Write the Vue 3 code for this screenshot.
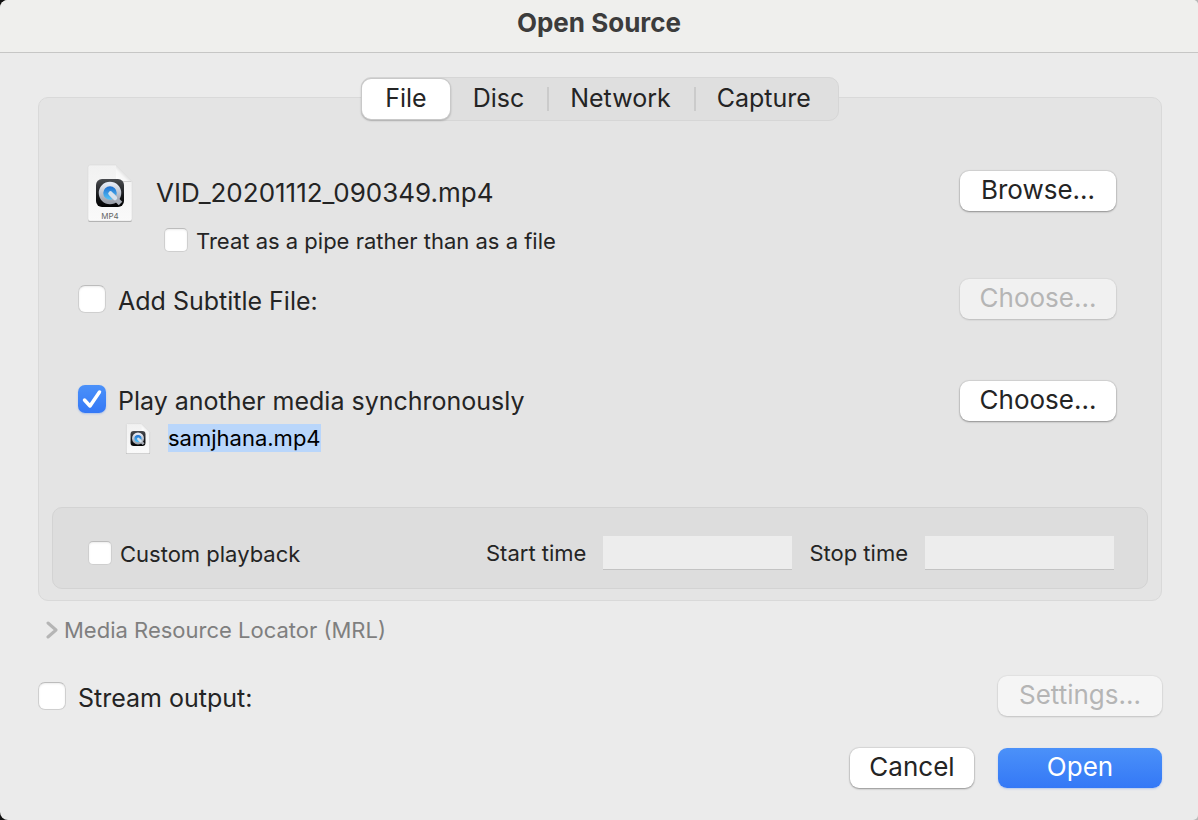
<script setup>
import { ref } from 'vue'

const tabs = ['File', 'Disc', 'Network', 'Capture']
const activeTab = ref('File')
const pipe = ref(false)
const subtitle = ref(false)
const sync = ref(true)
const custom = ref(false)
const stream = ref(false)
const start = ref('')
const stop = ref('')
</script>

<template>
  <div class="backdrop">
    <main class="window">
      <header class="titlebar"><h1>Open Source</h1></header>

      <div class="content">
        <nav class="tabs" role="tablist" aria-label="Source type">
          <button
            v-for="tab in tabs"
            :key="tab"
            type="button"
            role="tab"
            class="tab"
            :class="{ active: tab === activeTab }"
            :aria-selected="tab === activeTab"
            @click="activeTab = tab"
          >{{ tab }}</button>
        </nav>

        <section class="panel">
          <div class="row file-row">
            <svg class="doc" viewBox="0 -1 48 60" aria-hidden="true">
              <defs>
                <linearGradient id="page" x1="0" y1="0" x2="0" y2="1">
                  <stop offset="0" stop-color="#f1f1f1" />
                  <stop offset="1" stop-color="#fafafa" />
                </linearGradient>
                <linearGradient id="fold" x1="0" y1="1" x2="1" y2="0">
                  <stop offset="0" stop-color="#ffffff" />
                  <stop offset=".35" stop-color="#f6f6f6" />
                  <stop offset=".55" stop-color="#dadada" />
                </linearGradient>
                <linearGradient id="tile" x1="0" y1="0" x2="0" y2="1">
                  <stop offset="0" stop-color="#4a4c50" />
                  <stop offset=".6" stop-color="#15171a" />
                  <stop offset="1" stop-color="#020202" />
                </linearGradient>
                <linearGradient id="ring" x1="0" y1="0" x2="0" y2="1">
                  <stop offset="0" stop-color="#e4e9f4" />
                  <stop offset="1" stop-color="#9ba0aa" />
                </linearGradient>
                <linearGradient id="lens" x1="0" y1="0" x2="0" y2="1">
                  <stop offset="0" stop-color="#1560c8" />
                  <stop offset="1" stop-color="#5ed2ff" />
                </linearGradient>
              </defs>
              <path d="M4 3H30L46 19V57a2 2 0 0 1-2 2H4a2 2 0 0 1-2-2V5a2 2 0 0 1 2-2Z" fill="#a8a8a8" transform="translate(0 1)" />
              <path d="M4 3H30L46 19V57a2 2 0 0 1-2 2H4a2 2 0 0 1-2-2V5a2 2 0 0 1 2-2Z" fill="url(#page)" stroke="#d5d5d5" stroke-width=".5" />
              <path d="M30 4V18a2 2 0 0 0 2 2H46Z" fill="#d2d2d2" />
              <path d="M30 3V17a2 2 0 0 0 2 2H46Z" fill="url(#fold)" />
              <rect x="10" y="17" width="28" height="28" rx="6" fill="url(#tile)" />
              <circle cx="24" cy="31" r="9" fill="url(#lens)" stroke="url(#ring)" stroke-width="4.500" />
              <path d="M26 33L34.500 41.500" stroke="#a9aeb7" stroke-width="5" />
              <path d="M24.500 31.500L29 36" stroke="#d5e2ee" stroke-width="4.500" stroke-linecap="round" />
              <text x="24" y="57" text-anchor="middle" class="ext">MP4</text>
            </svg>
            <span class="filename">VID_20201112_090349.mp4</span>
            <button type="button" class="btn">Browse...</button>
          </div>

          <label class="check small pipe-row">
            <input v-model="pipe" type="checkbox" />
            <span>Treat as a pipe rather than as a file</span>
          </label>

          <div class="row subtitle-row">
            <label class="check">
              <input v-model="subtitle" type="checkbox" />
              <span>Add Subtitle File:</span>
            </label>
            <button type="button" class="btn" disabled>Choose...</button>
          </div>

          <div class="row sync-row">
            <label class="check">
              <input v-model="sync" type="checkbox" />
              <span>Play another media synchronously</span>
            </label>
            <button type="button" class="btn">Choose...</button>
          </div>

          <div class="media-row">
            <svg class="doc-small" viewBox="0 0 48 60" aria-hidden="true">
              <path d="M4 3H30L46 19V57a2 2 0 0 1-2 2H4a2 2 0 0 1-2-2V5a2 2 0 0 1 2-2Z" fill="#aaaaaa" transform="translate(0 2)" />
              <path d="M4 3H30L46 19V57a2 2 0 0 1-2 2H4a2 2 0 0 1-2-2V5a2 2 0 0 1 2-2Z" fill="url(#page)" stroke="#d2d2d2" />
              <path d="M31 3V18H46Z" fill="url(#fold)" />
              <rect x="10" y="17" width="28" height="28" rx="6" fill="url(#tile)" />
              <circle cx="24" cy="31" r="9" fill="url(#lens)" stroke="url(#ring)" stroke-width="4.500" />
              <path d="M26 33L34.500 41.500" stroke="#a9aeb7" stroke-width="5" />
              <path d="M24.500 31.500L29 36" stroke="#d5e2ee" stroke-width="4.500" stroke-linecap="round" />
            </svg>
            <mark>samjhana.mp4</mark>
          </div>

          <div class="playback">
            <label class="check small">
              <input v-model="custom" type="checkbox" />
              <span>Custom playback</span>
            </label>
            <div class="times">
              <label for="start">Start time</label>
              <input id="start" v-model="start" type="text" class="time" />
              <label for="stop">Stop time</label>
              <input id="stop" v-model="stop" type="text" class="time" />
            </div>
          </div>
        </section>

        <button type="button" class="mrl">
          <svg viewBox="0 0 12 18" aria-hidden="true">
            <path d="M2 2L10 9L2 16" fill="none" stroke="#b5b5b5" stroke-width="3" stroke-linecap="round" stroke-linejoin="round" />
          </svg>
          <span>Media Resource Locator (MRL)</span>
        </button>

        <div class="row stream-row">
          <label class="check">
            <input v-model="stream" type="checkbox" />
            <span>Stream output:</span>
          </label>
          <button type="button" class="btn wide" disabled>Settings...</button>
        </div>

        <footer class="actions">
          <button type="button" class="btn cancel">Cancel</button>
          <button type="button" class="btn wide primary">Open</button>
        </footer>
      </div>
    </main>
  </div>
</template>

<style>
body {
  margin: 0;
}
</style>

<style scoped>
.backdrop {
  background: linear-gradient(90deg, #111111 50%, #b8b8b8 50%);
}
.window {
  box-sizing: border-box;
  min-height: 100vh;
  border-radius: 8px 5px 5px 8px;
  overflow: hidden;
  background: #ebebeb;
  color: #242424;
  font-family: Inter, "Liberation Sans", sans-serif;
  font-size: 25px;
  line-height: 32px;
}
.titlebar {
  height: 52px;
  border-bottom: 1px solid #c6c6c5;
  background: #efefed;
  display: flex;
  justify-content: center;
}
h1 {
  margin: 0;
  padding-top: 7px;
  font-size: 26px;
  line-height: 32px;
  font-weight: 700;
  color: #3c3c3c;
}
.content {
  padding: 24px 36px 32px 38px;
  display: flex;
  flex-direction: column;
}
button {
  font: inherit;
  color: inherit;
  border: 0;
  padding: 0;
  margin: 0;
  background: none;
}
.tabs {
  position: relative;
  z-index: 1;
  align-self: center;
  display: flex;
  box-sizing: border-box;
  height: 44px;
  margin-bottom: -24px;
  padding-right: 4px;
  border: 1px solid #d6d6d6;
  border-radius: 10px;
  background: #dfdfdf;
}
.tab {
  position: relative;
  margin: 1px 0;
  padding: 0 23px 2px;
}
.tab + .tab:not(.active + .tab)::before {
  content: "";
  position: absolute;
  left: 0;
  top: 8px;
  width: 2px;
  height: 24px;
  background: #cbcbcb;
}
.tab.active {
  border-radius: 9px;
  background: #ffffff;
  box-shadow: 0 0 0 1px #c9c9c9, 0 1px 2px 1px rgba(0, 0, 0, 0.2);
}
.panel {
  border: 1px solid #d9d9d9;
  border-radius: 10px;
  background: #e4e4e4;
  padding: 63px 13px 11px;
}
.row {
  display: flex;
  align-items: center;
  justify-content: space-between;
}
.panel > .row {
  padding: 0 32px 0 26px;
}
.panel > .file-row {
  padding-left: 34px;
}
.doc {
  width: 48px;
  height: 60px;
  overflow: visible;
  flex: none;
}
.ext {
  font-size: 8px;
  fill: #666666;
}
.filename {
  flex: 1;
  padding: 3px 0 0 22px;
  font-size: 26px;
}
.btn {
  width: 156px;
  height: 40px;
  padding-bottom: 2px;
  border-radius: 9px;
  background: #ffffff;
  box-shadow: 0 0 1px 1px rgba(0, 0, 0, 0.08), 0 1px 2px rgba(0, 0, 0, 0.32);
  font-size: 26px;
}
.btn:disabled {
  color: #b5b5b5;
  background: #f1f1f1;
  box-shadow: 0 0 1px 1px rgba(0, 0, 0, 0.04), 0 1px 2px rgba(0, 0, 0, 0.14);
}
.btn.wide {
  width: 164px;
}
.btn.wide:disabled {
  background: #f5f5f5;
}
.btn.cancel {
  width: 124px;
}
.btn.primary {
  color: #ffffff;
  background: linear-gradient(#4b91f9, #3478f6);
  box-shadow: 0 1px 2px rgba(52, 120, 246, 0.3);
}
.check {
  display: flex;
  align-items: center;
  gap: 12px;
}
.check span {
  padding-top: 4px;
}
.check input {
  appearance: none;
  flex: none;
  width: 28px;
  height: 28px;
  margin: 0;
  border: 1px solid #cfcfcf;
  border-top-color: #bcbcbc;
  border-radius: 7px;
  background: #ffffff;
  box-shadow: inset 0 1px 2px rgba(0, 0, 0, 0.08);
}
.check input:checked {
  border: 0;
  background: url("data:image/svg+xml,%3Csvg xmlns='http://www.w3.org/2000/svg' viewBox='0 0 28 28'%3E%3Cpath d='M6.500 15L12 21L21.500 7' fill='none' stroke='white' stroke-width='3.500' stroke-linecap='round' stroke-linejoin='round'/%3E%3C/svg%3E"), linear-gradient(#4b91f9, #3478f6);
  box-shadow: 0 1px 2px rgba(52, 120, 246, 0.3);
}
.check.small {
  gap: 8px;
  font-size: 22px;
}
.check.small span {
  padding-top: 2px;
}
.check.small input {
  width: 24px;
  height: 24px;
  border-radius: 5px;
}
.pipe-row {
  padding-left: 112px;
  margin-top: 2px;
}
.subtitle-row {
  margin-top: 22px;
}
.sync-row {
  margin-top: 62px;
}
.sync-row .check {
  margin-bottom: 4px;
}
.media-row {
  display: flex;
  align-items: center;
  gap: 16px;
  padding-left: 72px;
  height: 34px;
  font-size: 22px;
}
.doc-small {
  width: 28px;
  height: 32px;
}
mark {
  line-height: 28px;
  background: #b9d6fb;
  color: #000000;
}
.playback {
  display: flex;
  align-items: center;
  justify-content: space-between;
  box-sizing: border-box;
  min-height: 82px;
  margin-top: 52px;
  padding: 10px 33px 0 35px;
  border: 1px solid #d3d3d3;
  border-radius: 10px;
  background: #dddddd;
  font-size: 22px;
}
.times {
  display: flex;
  align-items: center;
  gap: 17px;
}
.time {
  box-sizing: border-box;
  width: 189px;
  height: 34px;
  border: 0;
  border-bottom: 1px solid #c3c3c3;
  border-radius: 0;
  padding: 0 6px;
  background: #ededed;
  font: inherit;
}
.mrl {
  display: flex;
  align-items: center;
  align-self: flex-start;
  gap: 6px;
  margin: 13px 0 0 8px;
  font-size: 22px;
  color: #7f7f7f;
}
.mrl svg {
  width: 12px;
  height: 18px;
}
.stream-row {
  margin-top: 30px;
}
.actions {
  display: flex;
  justify-content: flex-end;
  gap: 24px;
  margin-top: 32px;
}
</style>
